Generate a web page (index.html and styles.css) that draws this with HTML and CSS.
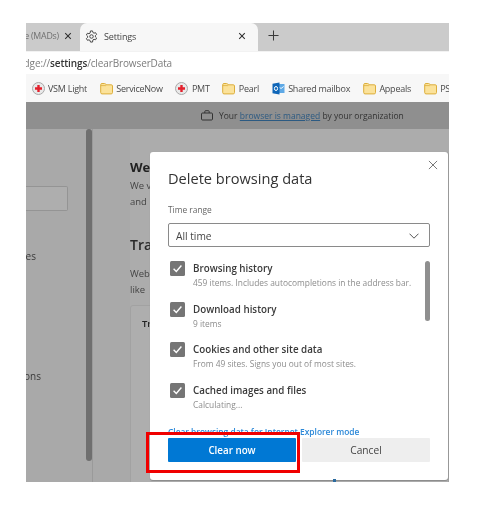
FILE: index.html
```html
<!DOCTYPE html>
<html lang="en">
<head>
<meta charset="utf-8">
<title>Settings</title>
<link rel="stylesheet" href="styles.css">
</head>
<body>
<svg class="defs" width="0" height="0" aria-hidden="true">
  <defs>
    <symbol id="folder" viewBox="0 0 13 12">
      <path d="M.7 2.200C.7 1.400 1.200 1 1.900 1h2.600c.6 0 .9.200 1.300.7l.5.6h5c.8 0 1.200.5 1.200 1.200v6.600c0 .8-.5 1.300-1.300 1.300H2c-.8 0-1.300-.5-1.300-1.300z" fill="#fbe29a" stroke="#dcae3c" stroke-width="1"/>
      <path d="M.9 3.100h4.800l.8-.7" fill="none" stroke="#dcae3c" stroke-width=".8"/>
    </symbol>
    <symbol id="redcross" viewBox="0 0 13 13">
      <circle cx="6.500" cy="6.500" r="6" fill="#e9e9e9" stroke="#a9a9a9" stroke-width="1"/>
      <path d="M5.300 3h2.400v2.300H10v2.400H7.700V10H5.300V7.700H3V5.300h2.300z" fill="#e3202c"/>
    </symbol>
    <symbol id="check" viewBox="0 0 15 15">
      <rect width="15" height="15" rx="1.500" fill="#757575"/>
      <path d="M3.600 7.800l2.700 2.700 5.100-6" fill="none" stroke="#fff" stroke-width="1.400"/>
    </symbol>
    <symbol id="close" viewBox="0 0 10 10">
      <path d="M1.500 1.500l7 7M8.500 1.500l-7 7" fill="none" stroke="currentColor" stroke-width="1.300"/>
    </symbol>
  </defs>
</svg>

<div class="window">
  <div class="tabstrip">
    <div class="old-tab">
      <span class="clip-left old-title"><span>Service (MADs)</span></span>
      <svg class="tab-x"><use href="#close"/></svg>
    </div>
    <div class="active-tab">
      <svg class="gear" viewBox="0 0 14 14">
        <path d="M5.900 1h2.200l.4 1.700 1.200.7 1.700-.5 1.100 1.900-1.300 1.200v1.400l1.300 1.200-1.100 1.900-1.700-.5-1.200.7L8.100 13H5.900l-.4-1.700-1.200-.7-1.700.5-1.100-1.900 1.300-1.200V6.600L1.500 5.400l1.100-1.900 1.700.5 1.200-.7z" fill="none" stroke="#3c3c3c" stroke-width="1"/>
        <circle cx="7" cy="7" r="1.900" fill="none" stroke="#3c3c3c" stroke-width="1"/>
      </svg>
      <span class="tab-title">Settings</span>
      <svg class="tab-x"><use href="#close"/></svg>
    </div>
    <svg class="plus" viewBox="0 0 12 12"><path d="M6 .5v11M.5 6h11" stroke="#3a3a3a" stroke-width="1.100" fill="none"/></svg>
  </div>

  <div class="addressbar">
    <span class="clip-left url-scheme"><span>edge://</span></span><b class="url-host">settings</b><span>/clearBrowserData</span>
  </div>

  <div class="bookmarks">
    <span class="bookmark"><svg class="bm-icon"><use href="#redcross"/></svg>VSM Light</span>
    <span class="bookmark"><svg class="bm-icon"><use href="#folder"/></svg>ServiceNow</span>
    <span class="bookmark"><svg class="bm-icon"><use href="#redcross"/></svg>PMT</span>
    <span class="bookmark"><svg class="bm-icon"><use href="#folder"/></svg>Pearl</span>
    <span class="bookmark"><svg class="bm-icon" viewBox="0 0 13 13">
      <path d="M5 2h7.500v9H5z" fill="#5ea9e6"/><path d="M6.500 4.500l2.500 2 2.700-2" fill="none" stroke="#fff" stroke-width=".9"/>
      <path d="M.5 1.800L7.500.5v12L.5 11.200z" fill="#0f66b8"/><ellipse cx="4" cy="6.500" rx="1.600" ry="2" fill="none" stroke="#fff" stroke-width="1"/>
    </svg>Shared mailbox</span>
    <span class="bookmark"><svg class="bm-icon"><use href="#folder"/></svg>Appeals</span>
    <span class="bookmark"><svg class="bm-icon"><use href="#folder"/></svg>PSNI</span>
  </div>

  <div class="managed">
    <svg class="case" viewBox="0 0 12 11"><path d="M1.500 3h9c.6 0 1 .4 1 1v5c0 .6-.4 1-1 1h-9c-.6 0-1-.4-1-1V4c0-.6.4-1 1-1zM3.800 3V1.500c0-.5.300-.8.800-.8h2.800c.5 0 .8.300.8.800V3" fill="none" stroke="#333" stroke-width="1"/></svg>
    <span>Your <a class="managed-link">browser is managed</a> by your organization</span>
  </div>

  <div class="page">
    <aside class="sidebar">
      <div class="search"></div>
      <div class="side-item side-privacy"><span>Privacy, search, and services</span></div>
      <div class="side-item side-perm"><span>Cookies and site permissions</span></div>
    </aside>
    <div class="side-scroll"></div>
    <main class="main">
      <h2 class="main-h1">Welcome</h2>
      <p class="main-p">We value your privacy<br>and</p>
      <h2 class="main-h2">Tracking</h2>
      <p class="main-p2">Websites use trackers<br>like</p>
      <div class="card"><span>Tracking</span></div>
    </main>

    <section class="dialog">
      <svg class="dlg-x" viewBox="0 0 11 11"><path d="M1 1l9 9M10 1l-9 9" fill="none" stroke="#6a6a6a" stroke-width="1"/></svg>
      <h1 class="dlg-title">Delete browsing data</h1>
      <div class="dlg-label">Time range</div>
      <div class="select">
        <span>All time</span>
        <svg class="chev" viewBox="0 0 10 6"><path d="M.5.700L5 5.200 9.500.700" fill="none" stroke="#555" stroke-width="1"/></svg>
      </div>
      <div class="options">
        <div class="option-list">
          <div class="option"><svg class="box"><use href="#check"/></svg><div><div class="opt-title">Browsing history</div><div class="opt-sub">459 items. Includes autocompletions in the address bar.</div></div></div>
          <div class="option"><svg class="box"><use href="#check"/></svg><div><div class="opt-title">Download history</div><div class="opt-sub">9 items</div></div></div>
          <div class="option"><svg class="box"><use href="#check"/></svg><div><div class="opt-title">Cookies and other site data</div><div class="opt-sub">From 49 sites. Signs you out of most sites.</div></div></div>
          <div class="option"><svg class="box"><use href="#check"/></svg><div><div class="opt-title">Cached images and files</div><div class="opt-sub">Calculating...</div></div></div>
        </div>
        <div class="dlg-scroll"></div>
      </div>
      <a class="ie-link">Clear browsing data for Internet Explorer mode</a>
      <div class="actions">
        <button class="btn btn-primary">Clear now</button>
        <button class="btn btn-cancel">Cancel</button>
      </div>
    </section>
    <div class="red-box"></div>
    <div class="blue-dot"></div>
  </div>
</div>
</body>
</html>
```

FILE: styles.css
```css
* { box-sizing: border-box; }
html, body { margin: 0; padding: 0; background: #fff; }
body {
  width: 497px;
  height: 516px;
  overflow: hidden;
  font-family: "Open Sans", "Noto Sans", sans-serif;
  color: #333;
}
.defs { position: absolute; }

.window {
  margin: 23px 0 0 26px;
  width: 423px;
  height: 459px;
  overflow: hidden;
  display: flex;
  flex-direction: column;
  filter: blur(.5px);
}

.clip-left {
  display: inline-flex;
  justify-content: flex-end;
  white-space: nowrap;
  overflow: hidden;
}

/* tab strip */
.tabstrip {
  height: 28px;
  flex: none;
  background: #cbcbcb;
  display: flex;
  align-items: stretch;
}
.old-tab {
  width: 54px;
  display: flex;
  align-items: center;
  padding-bottom: 2px;
  font-size: 8.800px;
  color: #707070;
}
.old-title { width: 33px; flex: none; letter-spacing: -.2px; }
.tab-x { width: 8px; height: 8px; margin-left: 5px; color: #2f2f2f; flex: none; }
.active-tab {
  width: 178px;
  background: #f7f7f7;
  border-radius: 7px 7px 0 0;
  display: flex;
  align-items: center;
  padding: 0 12px 2px 5px;
  font-size: 9px;
  letter-spacing: -.15px;
  color: #444;
}
.gear { width: 13px; height: 13px; flex: none; }
.tab-title { margin-left: 6px; flex: 1; }
.active-tab .tab-x { margin: 0; }
.plus { width: 11px; height: 11px; margin: 7px 0 0 10px; }

/* address bar */
.addressbar {
  height: 23px;
  flex: none;
  background: #fff;
  border-top: 1px solid #f2f2f2;
  display: flex;
  align-items: center;
  font-size: 10px;
  letter-spacing: -.12px;
  color: #7c7c7c;
  white-space: nowrap;
}
.url-scheme { width: 24px; flex: none; }
.url-host { font-weight: 600; color: #333; }

/* bookmarks */
.bookmarks {
  height: 28px;
  flex: none;
  background: #f7f7f7;
  display: flex;
  align-items: center;
  gap: 12.700px;
  padding: 1px 0 0 5.500px;
  font-size: 9px;
  letter-spacing: -.25px;
  color: #4a4a4a;
  white-space: nowrap;
  overflow: hidden;
}
.bookmark { display: inline-flex; align-items: center; gap: 3.500px; flex: none; }
.bm-icon { width: 13px; height: 13px; flex: none; }

/* managed banner */
.managed {
  height: 27px;
  flex: none;
  background: #8f8f8f;
  display: flex;
  align-items: center;
  justify-content: flex-start;
  padding-left: 175px;
  font-size: 8.500px;
  color: #333;
  white-space: nowrap;
}
.case { width: 12px; height: 11px; margin-right: 6px; flex: none; }
.managed-link { color: #2c5a82; text-decoration: underline; }

/* page */
.page {
  flex: 1;
  background: #a9a9a9;
  display: flex;
  position: relative;
  min-height: 0;
}
.sidebar {
  width: 60px;
  flex: none;
  overflow: hidden;
  font-size: 10px;
  color: #3a3a3a;
  padding-top: 57px;
}
.search {
  width: 42px;
  height: 25px;
  background: #aeaeae;
  border: 1px solid #949494;
  border-left: 0;
  border-radius: 0 2px 2px 0;
}
.side-item {
  display: flex;
  justify-content: flex-end;
  white-space: nowrap;
}
.side-privacy { width: 10px; margin-top: 38px; }
.side-perm { width: 15px; margin-top: 106px; }
.side-scroll {
  width: 6px;
  height: 332px;
  flex: none;
  background: #6f6f6f;
  border-radius: 3px;
}
.main {
  flex: 1;
  border-left: 1px solid #9a9a9a;
  padding: 29px 0 0 37px;
  overflow: hidden;
  background: linear-gradient(to right, #a9a9a9 37px, #acacac 37px);
  white-space: nowrap;
}
.main-h1 { margin: 0; font-size: 13px; font-weight: 700; line-height: 18px; color: #222; }
.main-p { margin: 2px 0 0; font-size: 9.500px; line-height: 16px; color: #444; }
.main-h2 { margin: 25px 0 0; font-size: 14px; font-weight: 600; line-height: 20px; color: #2a2a2a; }
.main-p2 { margin: 11px 0 0; font-size: 9.500px; line-height: 16px; color: #444; }
.card {
  margin-top: 7px;
  height: 300px;
  background: #aeaeae;
  border: 1px solid #a2a2a2;
  border-radius: 3px;
  padding: 11px 11px;
  font-size: 9.500px;
  font-weight: 600;
  color: #222;
}

/* dialog */
.dialog {
  position: absolute;
  left: 124px;
  top: 23px;
  width: 298px;
  height: 328px;
  background: #fff;
  border-radius: 3px;
  box-shadow: 0 1px 1px #8a8a8a, 1px 0 1px #9a9a9a;
  padding: 13px 18px 0 18px;
  display: flex;
  flex-direction: column;
}
.dlg-x { position: absolute; right: 10px; top: 8px; width: 10px; height: 10px; }
.dlg-title { margin: 0; font-size: 14.600px; font-weight: 400; line-height: 26px; color: #333; }
.dlg-label { margin-top: 12px; font-size: 8.400px; line-height: 14px; color: #666; }
.select {
  margin-top: 6px;
  height: 24px;
  border: 1.500px solid #8a8a8a;
  border-radius: 2px;
  display: flex;
  align-items: center;
  justify-content: space-between;
  padding: 1px 10px 0 7px;
  font-size: 10.200px;
  color: #444;
}
.chev { width: 10px; height: 6px; }
.options { display: flex; justify-content: space-between; margin-top: 14px; height: 165px; }
.option-list { display: flex; flex-direction: column; gap: 10.500px; }
.option { display: flex; gap: 8px; padding-left: 2px; }
.box { width: 15px; height: 15px; flex: none; }
.opt-title { font-size: 9.800px; font-weight: 600; line-height: 16px; color: #3a3a3a; }
.opt-sub { font-size: 8.400px; line-height: 12px; height: 14px; color: #8c8c8c; }
.dlg-scroll { width: 5px; height: 60px; background: #8f8f8f; border-radius: 3px; }
.ie-link { font-size: 8.400px; font-weight: 600; line-height: 12px; color: #2b88d8; white-space: nowrap; }
.actions { display: flex; gap: 6px; }
.btn {
  width: 128px;
  height: 24px;
  border: 0;
  border-radius: 1px;
  padding: 0;
  font-family: inherit;
}
.btn-primary { background: #0078d4; color: #fff; font-weight: 600; font-size: 9.800px; }
.btn-cancel { background: #eeeeee; color: #444; font-size: 10.200px; }

.red-box {
  position: absolute;
  left: 120px;
  top: 303px;
  width: 154px;
  height: 41px;
  border: 3px solid #f00000;
}
.blue-dot {
  position: absolute;
  left: 307px;
  top: 350px;
  width: 3px;
  height: 3px;
  background: #2b6a9e;
}
```
